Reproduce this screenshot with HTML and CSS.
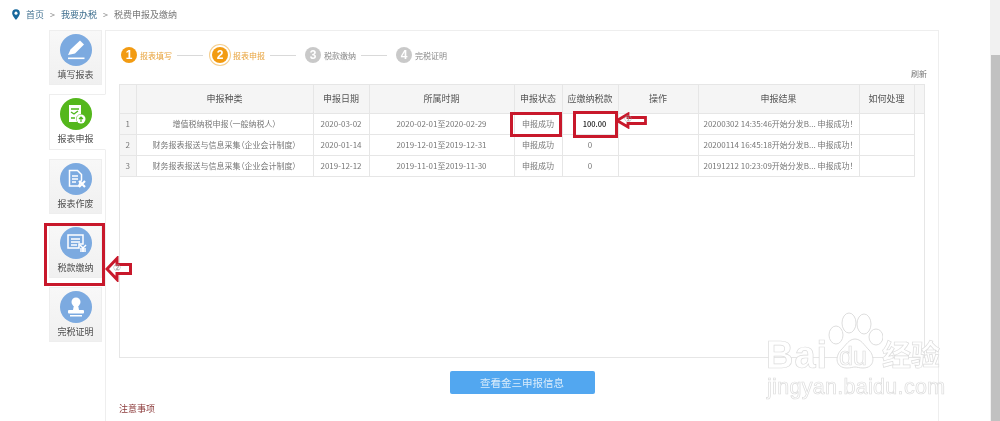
FILE: index.html
```html
<!DOCTYPE html>
<html lang="zh">
<head>
<meta charset="utf-8">
<title>税费申报及缴纳</title>
<link rel="stylesheet" href="styles.css">
</head>
<body>
<div class="page">
  <div class="content">
    <nav class="crumb">
      <svg class="pin" viewBox="0 0 10 13" width="8" height="11"><path d="M5 0a4.8 4.8 0 0 0-4.8 4.8C.2 8 5 13 5 13s4.8-5 4.8-8.2A4.8 4.8 0 0 0 5 0z" fill="#17689c"/><circle cx="5" cy="4.8" r="1.9" fill="#fff"/></svg>
      <span class="crumb-link">首页</span><span class="sep">&gt;</span>
      <span class="crumb-link">我要办税</span><span class="sep">&gt;</span>
      <span>税费申报及缴纳</span>
    </nav>
    <div class="main">
      <aside class="side">
        <div class="tab">
          <span class="ico"><svg viewBox="0 0 32 32" width="32" height="32"><path d="M8 21l2.500-5.500L20 6.500l4 4-9 9z" fill="#fff"/><path d="M8 23.500h16.500v1.600H8z" fill="#fff"/></svg></span>
          <span class="tab-label">填写报表</span>
        </div>
        <div class="tab active">
          <span class="ico green"><svg viewBox="0 0 32 32" width="32" height="32"><path d="M9 7h12v9a5 5 0 0 0-4 8H9z" fill="#fff"/><path d="M11 11h8M11 14l3 2 4-3M11 20h4" stroke="#4fb81c" stroke-width="1.400" fill="none"/><circle cx="21" cy="21" r="4.500" fill="#fff"/><path d="M21 24v-5M19 21l2-2 2 2" stroke="#4fb81c" stroke-width="1.200" fill="none"/></svg></span>
          <span class="tab-label">报表申报</span>
        </div>
        <div class="tab">
          <span class="ico"><svg viewBox="0 0 32 32" width="32" height="32"><path d="M9.500 7.500h8l4 4V17l-3 6H9.500z" fill="none" stroke="#fff" stroke-width="1.500"/><path d="M12 13h6M12 16h6M12 19h4" stroke="#fff" stroke-width="1.300"/><path d="M19 18l6 6M25 18l-6 6" stroke="#fff" stroke-width="2.200"/></svg></span>
          <span class="tab-label">报表作废</span>
        </div>
        <div class="tab">
          <span class="ico"><svg viewBox="0 0 32 32" width="32" height="32"><path d="M8 8h15v9h-4v4H8z" fill="none" stroke="#fff" stroke-width="1.500"/><path d="M11 12h9M11 15h9M11 18h6" stroke="#fff" stroke-width="1.300"/><path d="M20 18l3 3 3-3M23 21v4M20 22h6M20 24h6" stroke="#fff" stroke-width="1.500" fill="none"/></svg></span>
          <span class="tab-label">税款缴纳</span>
        </div>
        <div class="tab">
          <span class="ico"><svg viewBox="0 0 32 32" width="32" height="32"><circle cx="16" cy="11" r="4.500" fill="#fff"/><path d="M14 14h4l1 5h-6z" fill="#fff"/><rect x="8" y="19" width="16" height="3.500" rx="1" fill="#fff"/><rect x="10" y="24" width="12" height="1.500" fill="#fff"/></svg></span>
          <span class="tab-label">完税证明</span>
        </div>
      </aside>
      <section class="panel">
        <ol class="steps">
          <li class="step done"><b class="num">1</b><span>报表填写</span></li>
          <li class="rule"></li>
          <li class="step now"><b class="num">2</b><span>报表申报</span></li>
          <li class="rule"></li>
          <li class="step"><b class="num">3</b><span>税款缴纳</span></li>
          <li class="rule"></li>
          <li class="step"><b class="num">4</b><span>完税证明</span></li>
        </ol>
        <div class="refresh">刷新</div>
        <div class="grid-box">
          <table class="grid">
            <colgroup>
              <col class="c1"><col class="c2"><col class="c3"><col class="c4"><col class="c5"><col class="c6"><col class="c7"><col class="c8"><col class="c9"><col>
            </colgroup>
            <thead>
              <tr><th></th><th>申报种类</th><th>申报日期</th><th>所属时期</th><th>申报状态</th><th>应缴纳税款</th><th>操作</th><th>申报结果</th><th>如何处理</th><th></th></tr>
            </thead>
            <tbody>
              <tr><td class="idx">1</td><td>增值税纳税申报（一般纳税人）</td><td>2020-03-02</td><td>2020-02-01至2020-02-29</td><td>申报成功</td><td class="strong">100.00</td><td></td><td>20200302 14:35:46开始分发B... 申报成功！</td><td></td><td class="fill"></td></tr>
              <tr><td class="idx">2</td><td>财务报表报送与信息采集（企业会计制度）</td><td>2020-01-14</td><td>2019-12-01至2019-12-31</td><td>申报成功</td><td>0</td><td></td><td>20200114 16:45:18开始分发B... 申报成功！</td><td></td><td class="fill"></td></tr>
              <tr><td class="idx">3</td><td>财务报表报送与信息采集（企业会计制度）</td><td>2019-12-12</td><td>2019-11-01至2019-11-30</td><td>申报成功</td><td>0</td><td></td><td>20191212 10:23:09开始分发B... 申报成功！</td><td></td><td class="fill"></td></tr>
            </tbody>
          </table>
        </div>
        <div class="actions"><button class="btn">查看金三申报信息</button></div>
        <div class="note">注意事项</div>
      </section>
    </div>
    <div class="mark box-tab"></div>
    <div class="mark box-status"></div>
    <div class="mark box-amount"></div>
    <svg class="arrow arrow-tab" viewBox="0 0 27 26" width="27" height="26"><path d="M2 13L12 2.500v6h13.500v9H12v6z" fill="#fff" stroke="#c8182b" stroke-width="3"/></svg>
    <svg class="arrow arrow-amount" viewBox="0 0 32 17" width="32" height="17"><path d="M2 8.500L13 2v3.500h17.500v6H13V15z" fill="#fff" stroke="#c8182b" stroke-width="2.800"/></svg>
    <span class="circled circled-tab">②</span>
    <span class="circled circled-amount">①</span>
    <div class="wm" aria-hidden="true">
      <svg class="paw" viewBox="0 0 56 64" width="56" height="64"><g fill="#fff" stroke="#ddd" stroke-width="1"><ellipse cx="9" cy="23" rx="7" ry="9"/><ellipse cx="22" cy="11" rx="7" ry="10"/><ellipse cx="37" cy="12" rx="7" ry="10"/><ellipse cx="49" cy="25" rx="7" ry="8"/><path d="M28 27c6 0 9 6 14 11 6 6 6 18-6 18-4 0-6-1-8-1s-4 1-8 1C8 56 8 44 14 38c5-5 8-11 14-11z"/></g></svg>
      <span class="wm-bai">Bai</span>
      <span class="wm-du">du</span>
      <span class="wm-cn">经验</span>
      <span class="wm-url">jingyan.baidu.com</span>
    </div>
  </div>
  <div class="scrollbar"><div class="thumb"></div></div>
</div>
</body>
</html>
```
FILE: styles.css
```css
* { box-sizing: border-box; }
html, body { margin: 0; padding: 0; height: 421px; overflow: hidden; background: #fff; }
body { font-family: "Noto Sans CJK SC", "Liberation Sans", sans-serif; color: #666; font-size: 9px; }
.page { display: flex; width: 1000px; height: 421px; }
.content { position: relative; width: 990px; height: 421px; overflow: hidden; filter: blur(0.35px); }
.scrollbar { width: 10px; height: 421px; background: #f1f1f1; padding: 55px 0 0 1px; }
.thumb { height: 100%; background: #c1c1c1; }

.crumb { display: flex; align-items: center; height: 21px; margin-bottom: 9px; padding: 8px 0 0 12px; font-size: 9px; color: #777; }
.pin { margin-right: 6px; }
.crumb-link { color: #3f6f8f; }
.sep { margin: 0 6px; color: #888; }

.main { display: flex; padding-left: 49px; }
.side { width: 56px; display: flex; flex-direction: column; gap: 9px; flex: none; position: relative; z-index: 1; }
.tab { width: 53px; height: 55px; background: linear-gradient(#f8f8f8, #f0f0f0); border: 1px solid #eeeeee; display: flex; flex-direction: column; align-items: center; padding-top: 3px; }
.tab.active { width: 57px; height: 56px; background: #fff; border-right-color: #fff; padding-right: 4px; }
.ico { width: 32px; height: 32px; border-radius: 50%; background: #7caae0; display: block; }
.ico svg { display: block; }
.ico.green { background: #54b71c; }
.tab-label { font-size: 9px; line-height: 13px; margin-top: 2px; color: #4d4d4d; white-space: nowrap; }

.panel { width: 834px; height: 420px; border: 1px solid #eeeeee; border-bottom: 0; padding: 0 13px; flex: none; }
.steps { list-style: none; margin: 0; padding: 14px 0 0 2px; display: flex; align-items: center; height: 34px; }
.step { display: flex; align-items: center; gap: 3px; font-size: 8px; color: #888; white-space: nowrap; }
.num { width: 16px; height: 16px; border-radius: 50%; background: #c9c9c9; color: #fff; font: bold 12px/16px "Liberation Sans", sans-serif; text-align: center; }
.step.done, .step.now { color: #e8a33d; }
.done .num, .now .num { background: #f29b12; }
.step.now { gap: 5px; }
.now .num { box-shadow: 0 0 0 2px #fff, 0 0 0 3px #f6cf8e; }
.step span { width: 32px; }
.rule { width: 26px; height: 1px; background: #d9d9d9; margin: 0 9px 0 5px; }
.refresh { text-align: right; font-size: 8px; line-height: 11px; margin: 3px -2px 0 0; height: 16px; color: #777; }
.grid-box { width: 806px; height: 274px; border: 1px solid #e6e6e6; }
.grid { width: 804px; table-layout: fixed; border-collapse: collapse; font-size: 8px; color: #777; font-feature-settings: "palt"; }
.c1 { width: 16px; } .c2 { width: 177px; } .c3 { width: 56px; } .c4 { width: 145px; } .c5 { width: 48px; }
.c6 { width: 56px; } .c7 { width: 80px; } .c8 { width: 161px; } .c9 { width: 55px; }
.grid th { height: 28px; background: #f5f5f5; border-right: 1px solid #e6e6e6; border-bottom: 1px solid #e6e6e6; font-weight: normal; font-size: 9px; color: #555; padding: 0; white-space: nowrap; }
.grid th:last-child { border-right: 0; }
.grid td { height: 21px; border: 1px solid #e6e6e6; border-top: 0; border-left: 0; text-align: center; padding: 0; white-space: nowrap; overflow: hidden; }
.grid td.fill { border: 0; }
.grid td.idx { background: #f5f5f5; color: #777; }
.grid td.strong { color: #222; font-weight: 500; font-size: 7.5px; padding-left: 9px; }

.actions { display: flex; justify-content: center; padding: 13px 0 0 0; width: 806px; }
.btn { width: 145px; height: 23px; background: #52a7f0; border: 0; border-radius: 2px; color: #d9ecfb; font: 10.500px "Noto Sans CJK SC", sans-serif; padding: 0; }
.note { margin-top: 8px; font-size: 9px; line-height: 13px; color: #8c3b3b; }

.mark { position: absolute; border: 3px solid #c8182b; z-index: 3; }
.box-tab { left: 44px; top: 223px; width: 61px; height: 63px; }
.box-status { left: 510px; top: 112px; width: 52px; height: 25px; }
.box-amount { left: 573px; top: 111px; width: 45px; height: 27px; }
.arrow { position: absolute; z-index: 3; }
.arrow-tab { left: 105px; top: 256px; }
.arrow-amount { left: 615px; top: 112px; }
.circled { position: absolute; z-index: 4; font-size: 9px; color: #999; font-family: "DejaVu Sans", sans-serif; }
.circled-tab { left: 113px; top: 263px; }
.circled-amount { left: 624px; top: 114px; }

.wm { position: absolute; left: 767px; top: 312px; width: 180px; height: 90px; z-index: 5; }
.wm span { position: absolute; color: #fff; -webkit-text-stroke: 0.7px #dcdcdc; white-space: nowrap; font-family: "Liberation Sans", sans-serif; line-height: 1; }
.paw { position: absolute; left: 60px; top: 0; }
.wm-bai { left: -1px; top: 24px; font-size: 38px; font-weight: bold; letter-spacing: 1px; }
.wm-du { left: 72px; top: 32px; font-size: 25px; }
.wm .wm-cn { left: 115px; top: 27px; font-size: 29px; font-family: "Noto Sans CJK SC", sans-serif; font-weight: 700; }
.wm-url { left: 0; top: 65px; font-size: 21.500px; letter-spacing: 0.3px; }
```
